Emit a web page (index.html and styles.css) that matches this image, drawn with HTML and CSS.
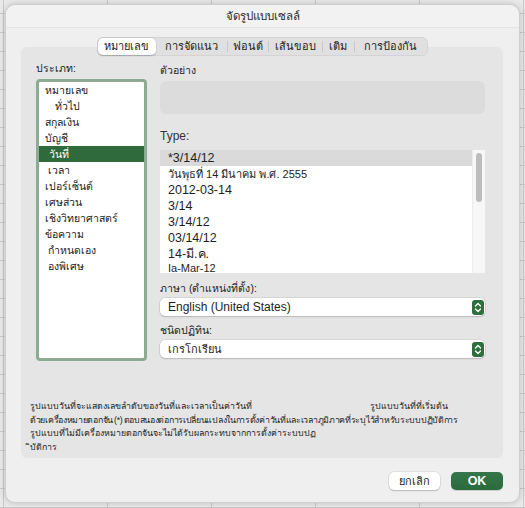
FILE: index.html
```html
<!DOCTYPE html>
<html lang="th">
<head>
<meta charset="utf-8">
<title>จัดรูปแบบเซลล์</title>
<link rel="stylesheet" href="styles.css">
</head>
<body>
<div class="dialog">
  <div class="titlebar">จัดรูปแบบเซลล์</div>
  <div class="panel">
    <div class="tabs">
      <div class="tab tab-active w1">หมายเลข</div>
      <div class="tab w2">การจัดแนว</div>
      <div class="sep"></div>
      <div class="tab w3">ฟอนต์</div>
      <div class="sep"></div>
      <div class="tab w4">เส้นขอบ</div>
      <div class="sep"></div>
      <div class="tab w5">เติม</div>
      <div class="sep"></div>
      <div class="tab w6">การป้องกัน</div>
    </div>
    <div class="cols">
      <div class="col-left">
        <div class="label lbl-cat">ประเภท:</div>
        <div class="catlist">
          <div class="cat">หมายเลข</div>
          <div class="cat ind2">ทั่วไป</div>
          <div class="cat">สกุลเงิน</div>
          <div class="cat">บัญชี</div>
          <div class="cat cat-sel">วันที่</div>
          <div class="cat ind1">เวลา</div>
          <div class="cat">เปอร์เซ็นต์</div>
          <div class="cat">เศษส่วน</div>
          <div class="cat">เชิงวิทยาศาสตร์</div>
          <div class="cat">ข้อความ</div>
          <div class="cat ind1">กำหนดเอง</div>
          <div class="cat ind1">องพิเศษ</div>
        </div>
      </div>
      <div class="col-right">
        <div class="label lbl-sample">ตัวอย่าง</div>
        <div class="sample"></div>
        <div class="type-label">Type:</div>
        <div class="typebox">
          <div class="typelist">
            <div class="trow trow-sel">*3/14/12</div>
            <div class="trow thai">วันพุธที่ 14 มีนาคม พ.ศ. 2555</div>
            <div class="trow">2012-03-14</div>
            <div class="trow">3/14</div>
            <div class="trow">3/14/12</div>
            <div class="trow">03/14/12</div>
            <div class="trow">14-มี.ค.</div>
            <div class="trow trow-last">Ia-Mar-12</div>
          </div>
          <div class="scrollbar"><div class="thumb"></div></div>
        </div>
        <div class="label lbl-lang">ภาษา (ตำแหน่งที่ตั้ง):</div>
        <div class="select">
          <span class="select-text">English (United States)</span>
          <span class="stepper"><svg width="12" height="15" viewBox="0 0 12 15"><path d="M3.5 6 L6 3.5 L8.5 6 M3.5 9 L6 11.5 L8.5 9" fill="none" stroke="#fff" stroke-width="1.3" stroke-linecap="round" stroke-linejoin="round"/></svg></span>
        </div>
        <div class="label lbl-cal">ชนิดปฏิทิน:</div>
        <div class="select">
          <span class="select-text thai">เกรโกเรียน</span>
          <span class="stepper"><svg width="12" height="15" viewBox="0 0 12 15"><path d="M3.5 6 L6 3.5 L8.5 6 M3.5 9 L6 11.5 L8.5 9" fill="none" stroke="#fff" stroke-width="1.3" stroke-linecap="round" stroke-linejoin="round"/></svg></span>
        </div>
      </div>
    </div>
    <div class="desc">
      <div class="dline"><span class="dpart1">รูปแบบวันที่จะแสดงเลขลำดับของวันที่และเวลาเป็นค่าวันที่</span><span>รูปแบบวันที่ที่เริ่มต้น</span></div>
      <div class="dline dline-tight">ด้วยเครื่องหมายดอกจัน (*) ตอบสนองต่อการเปลี่ยนแปลงในการตั้งค่าวันที่และเวลาภูมิภาคที่ระบุไว้สำหรับระบบปฏิบัติการ</div>
      <div class="dline">รูปแบบที่ไม่มีเครื่องหมายดอกจันจะไม่ได้รับผลกระทบจากการตั้งค่าระบบปฏ</div>
      <div class="dline">ิบัติการ</div>
    </div>
  </div>
  <div class="buttons">
    <div class="btn btn-cancel">ยกเลิก</div>
    <div class="btn btn-ok">OK</div>
  </div>
</div>
</body>
</html>
```

FILE: styles.css
```css
* { box-sizing: border-box; }

html, body {
  margin: 0;
  padding: 0;
}

body {
  width: 525px;
  height: 508px;
  overflow: hidden;
  background-color: #e9e9e9;
  background-image:
    linear-gradient(to bottom, #c9c9c9 1px, transparent 1px),
    linear-gradient(to right, #c9c9c9 1px, transparent 1px);
  background-size: 100% 19px, 104px 100%;
  background-position: 0 13px, 3px 0;
  font-family: "Liberation Sans", "Noto Sans", "DejaVu Sans", sans-serif;
  color: #1e1e1e;
  padding: 4px 0 0 5px;
}

.dialog {
  width: 515px;
  height: 499px;
  background: #efefef;
  border: 1px solid #cfcfcf;
  border-radius: 10px;
  box-shadow: 0 0 6px rgba(0,0,0,0.18);
  display: flex;
  flex-direction: column;
  padding: 0 16px 0 15px;
}

.titlebar {
  height: 23px;
  margin: 0 -16px 0 -15px;
  line-height: 23px;
  text-align: center;
  font-size: 11.5px;
  color: #2a2a2a;
  border-bottom: 1px solid #e4e4e4;
  background: #f2f2f2;
  border-radius: 10px 10px 0 0;
}

.panel {
  margin-top: 19px;
  height: 411px;
  background: #e5e5e5;
  border-radius: 6px;
  display: flex;
  flex-direction: column;
}

.tabs {
  margin: -10px auto 0;
  width: 331px;
  height: 19px;
  background: #e0e0e0;
  border: 1px solid #d4d4d4;
  border-radius: 6px;
  display: flex;
  align-items: center;
  font-size: 11px;
}

.tab {
  height: 17px;
  line-height: 17px;
  text-align: center;
  color: #222;
  white-space: nowrap;
}
.tab-active {
  background: #fff;
  border-radius: 5px;
  box-shadow: 0 0.5px 1.5px rgba(0,0,0,0.25);
}
.w1 { width: 59px; }
.w2 { width: 71px; }
.w3 { width: 40px; }
.w4 { width: 53px; }
.w5 { width: 31px; }
.w6 { width: 72px; }

.sep {
  width: 1px;
  height: 11px;
  background: #c8c8c8;
}

.cols {
  display: flex;
  gap: 13px;
  padding-left: 15px;
}

.col-left {
  width: 111px;
  display: flex;
  flex-direction: column;
}

.col-right {
  width: 325px;
  display: flex;
  flex-direction: column;
}

.label {
  font-size: 10.5px;
  line-height: 12px;
  height: 12px;
  color: #222;
  white-space: nowrap;
}

.lbl-cat { margin-top: 6px; }
.lbl-sample { margin-top: 8px; }

.catlist {
  margin-top: 5px;
  height: 282px;
  border: 3px solid #8dab93;
  border-radius: 4px;
  background: #fff;
  display: flex;
  flex-direction: column;
}

.cat {
  height: 16px;
  line-height: 16px;
  font-size: 10.5px;
  padding-left: 6px;
  color: #1a1a1a;
  white-space: nowrap;
}
.cat.ind1 { padding-left: 9px; }
.cat.ind2 { padding-left: 16px; }
.cat-sel {
  background: #2f6a3c;
  color: #fff;
  padding-left: 10px;
}

.sample {
  margin-top: 5px;
  height: 33px;
  background: #dcdcdc;
  border-radius: 6px;
}

.type-label {
  margin-top: 15px;
  font-size: 12px;
  line-height: 14px;
  height: 14px;
  color: #333;
}

.typebox {
  margin-top: 7px;
  height: 123px;
  display: flex;
  background: #fff;
}

.typelist {
  flex: 1;
  overflow: hidden;
}

.trow {
  height: 16px;
  line-height: 16px;
  font-size: 12.5px;
  padding-left: 8px;
  color: #1e1e1e;
  white-space: nowrap;
}
.trow.thai { font-size: 11px; }
.trow-sel { background: #dadada; }
.trow-last {
  font-size: 11px;
  height: 11px;
  line-height: 12px;
}

.scrollbar {
  width: 13px;
  background: #f7f7f7;
  border-left: 1px solid #ececec;
  padding: 3px 0 0 3px;
}
.thumb {
  width: 6px;
  height: 49px;
  background: #bdbdbd;
  border-radius: 3px;
}

.lbl-lang { margin-top: 9px; }
.lbl-cal { margin-top: 8px; }

.select {
  margin-top: 4px;
  height: 18px;
  background: #fff;
  border-radius: 5px;
  box-shadow: 0 0 0 0.5px rgba(0,0,0,0.12), 0 1px 1.5px rgba(0,0,0,0.15);
  display: flex;
  align-items: center;
  justify-content: space-between;
  padding: 0 1px 0 8px;
}

.select-text {
  font-size: 12px;
  color: #1e1e1e;
}
.select-text.thai { font-size: 11px; }

.stepper {
  width: 12px;
  height: 15px;
  background: #2f6e3f;
  border-radius: 3px;
  display: flex;
}

.desc {
  margin-top: auto;
  margin-bottom: 4px;
  padding-left: 9px;
  font-size: 8.8px;
  line-height: 13.5px;
  color: #1e1e1e;
}
.dline { white-space: nowrap; height: 13.5px; }
.dline-tight { letter-spacing: -0.3px; word-spacing: -1px; }
.dpart1 { display: inline-block; width: 340px; }

.buttons {
  margin-top: 14px;
  display: flex;
  justify-content: flex-end;
  gap: 11px;
}

.btn {
  height: 18px;
  line-height: 18px;
  border-radius: 5px;
  text-align: center;
  font-size: 11px;
}
.btn-cancel {
  width: 51px;
  background: #fff;
  color: #222;
  box-shadow: 0 0 0 0.5px rgba(0,0,0,0.12), 0 1px 1.5px rgba(0,0,0,0.18);
}
.btn-ok {
  width: 52px;
  background: linear-gradient(#35774a, #2c6a3c);
  color: #fff;
  font-weight: bold;
  font-size: 12.5px;
  box-shadow: 0 1px 1px rgba(0,0,0,0.15);
}
```
